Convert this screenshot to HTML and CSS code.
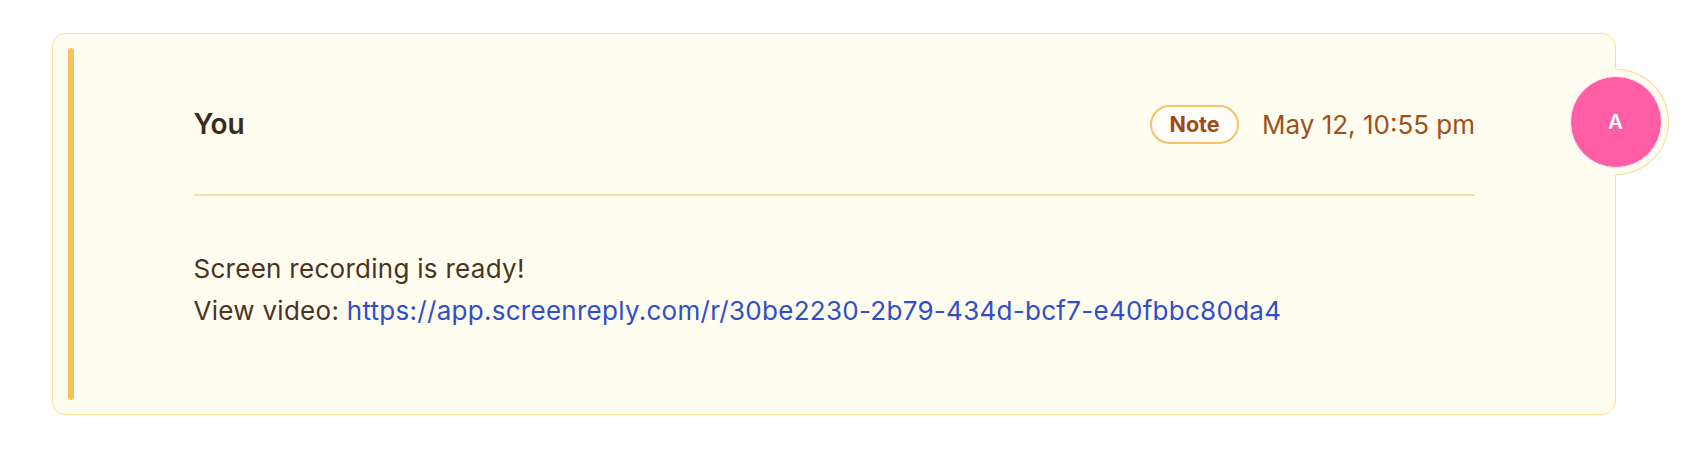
FILE: index.html
```html
<!DOCTYPE html>
<html lang="en">
<head>
<meta charset="utf-8">
<title>Note</title>
<link rel="stylesheet" href="styles.css">
</head>
<body>
  <div class="card">
    <div class="accent"></div>
    <div class="content">
      <div class="header">
        <div class="author">You</div>
        <div class="meta">
          <span class="badge">Note</span>
          <span class="date">May 12, 10:55 pm</span>
        </div>
      </div>
      <div class="divider"></div>
      <div class="body">
        <p>Screen recording is ready!</p>
        <p>View video: <a href="#" class="link">https://app.screenreply.com/r/30be2230-2b79-434d-bcf7-e40fbbc80da4</a></p>
      </div>
    </div>
    <div class="avatar-slot">
      <div class="avatar">A</div>
    </div>
  </div>
</body>
</html>
```
FILE: styles.css
```css
* { box-sizing: border-box; }
html, body { margin: 0; padding: 0; background: #ffffff; }
body {
  font-family: Inter, "Noto Sans", "Liberation Sans", sans-serif;
  width: 1702px;
  height: 450px;
  overflow: hidden;
}
.card {
  position: relative;
  margin: 33px 0 0 52px;
  width: 1564px;
  height: 382px;
  background: #fffcf0;
  border: 1.5px solid #fbdc9c;
  border-radius: 14px;
  display: flex;
  padding: 13.5px 0 14px 14.5px;
}
.accent {
  width: 6px;
  flex: 0 0 6px;
  background: #f5c15e;
  border-radius: 3px;
}
.content {
  flex: 1;
  padding: 57px 140px 0 120px;
}
.header {
  display: flex;
  align-items: center;
  justify-content: space-between;
  height: 39px;
}
.author {
  font-size: 28px;
  font-weight: 600;
  color: #3a2a1f;
  letter-spacing: -0.1px;
}
.meta {
  display: flex;
  align-items: center;
  gap: 23px;
}
.badge {
  display: inline-flex;
  align-items: center;
  height: 39px;
  padding: 0 17.5px;
  border: 2px solid #f3c26a;
  border-radius: 20px;
  background: #fffdf7;
  color: #9a4b18;
  font-size: 21.5px;
  font-weight: 700;
}
.date {
  font-size: 26px;
  color: #9c5119;
}
.divider {
  height: 1.5px;
  background: #fbdc9c;
  margin-top: 50.5px;
}
.body {
  margin-top: 52.5px;
  font-size: 26px;
  line-height: 42px;
  color: #4b3320;
  letter-spacing: 0.28px;
}
.body p { margin: 0; }
.link {
  color: #2f4ec8;
  text-decoration: none;
}
.avatar-slot {
  position: absolute;
  top: 34.5px;
  right: -53.5px;
  width: 106px;
  height: 106px;
  display: flex;
  align-items: center;
  justify-content: center;
}
.avatar-slot::before {
  content: "";
  position: absolute;
  inset: 0;
  border-radius: 50%;
  background: #fffcf0;
  border: 1.5px solid;
  border-color: #f8d994 #f8d994 transparent transparent;
  transform: rotate(45deg);
}
.avatar {
  position: relative;
  width: 92px;
  height: 92px;
  border-radius: 50%;
  background: #ff5ea5;
  border: 1px solid #ffe9f2;
  color: #ffffff;
  font-size: 20px;
  font-weight: 600;
  display: flex;
  align-items: center;
  justify-content: center;
}
```
